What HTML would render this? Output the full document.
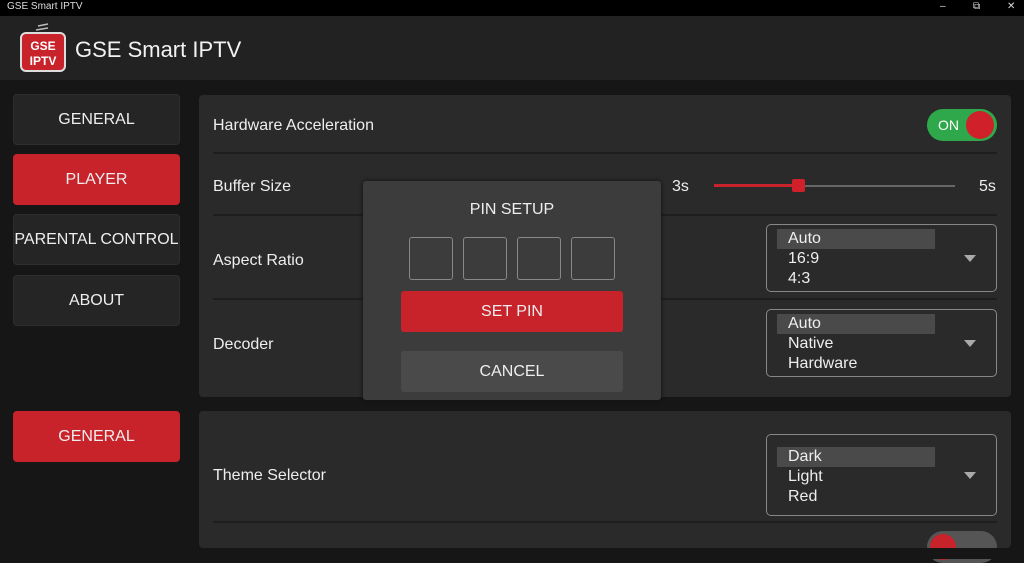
<!DOCTYPE html><html><head><style>
*{margin:0;padding:0;box-sizing:border-box}
body{width:1024px;height:559px;background:#161616;font-family:"Liberation Sans",sans-serif;color:#eee;position:relative;overflow:hidden}
.a{position:absolute}
.tb{left:0;top:0;width:1024px;height:16px;background:#000;font-size:10px;line-height:14px;padding-left:7px;color:#ddd}
.hd{left:0;top:16px;width:1024px;height:64px;background:#222}
.btn{position:absolute;left:13px;width:167px;height:51px;border-radius:4px;background:#252525;border:1px solid #2e2e2e;display:flex;align-items:center;justify-content:center;font-size:16px;color:#eee}
.red{background:#c8222a;border-color:#c8222a}
.pn{background:#2a2a2a;border-radius:4px}
.lbl{font-size:16px;color:#eee}
.ln{height:2px;background:#1e1e1e;left:213px;width:784px}
.dd{border:1px solid #888;border-radius:5px;width:231px;font-size:16px;line-height:20px;padding:4px 10px 0 10px}
.dd div{padding-left:11px}
.dd .s{background:#4a4a4a;width:158px}
.arr{position:absolute;right:20px;top:50%;margin-top:-3px;width:0;height:0;border-left:6px solid transparent;border-right:6px solid transparent;border-top:7px solid #aaa}
.box{top:237px;width:44px;height:43px;border:1px solid #888;border-radius:3px}
</style></head><body>
<div class="a tb">GSE Smart IPTV<span style="position:absolute;left:940px">&#8211;</span><span style="position:absolute;left:973px">&#10697;</span><span style="position:absolute;left:1007px">&#10005;</span></div>
<div class="a hd"></div>
<svg class="a" style="left:18px;top:22px" width="50" height="52" viewBox="0 0 50 52"><path d="M20 4l10-2M18 8l12-2" stroke="#bbb" stroke-width="1.5"/><rect x="3" y="11" width="44" height="38" rx="5" fill="#c8222a" stroke="#ddd" stroke-width="2"/><text x="25" y="28" font-family="Liberation Sans" font-weight="bold" font-size="12" fill="#fff" text-anchor="middle">GSE</text><text x="25" y="43" font-family="Liberation Sans" font-weight="bold" font-size="12" fill="#fff" text-anchor="middle">IPTV</text></svg>
<div class="a" style="left:75px;top:37px;font-size:22px;color:#f2f2f2">GSE Smart IPTV</div>
<div class="btn" style="top:94px">GENERAL</div>
<div class="btn red" style="top:154px">PLAYER</div>
<div class="btn" style="top:214px">PARENTAL CONTROL</div>
<div class="btn" style="top:275px">ABOUT</div>
<div class="btn red" style="top:411px">GENERAL</div>
<div class="a pn" style="left:199px;top:95px;width:812px;height:302px"></div>
<div class="a pn" style="left:199px;top:411px;width:812px;height:137px"></div>
<div class="a lbl" style="left:213px;top:117px">Hardware Acceleration</div>
<div class="a" style="left:927px;top:109px;width:70px;height:32px;border-radius:16px;background:#2ea84a;font-size:14px;line-height:32px;padding-left:11px;color:#fff">ON<div class="a" style="left:39px;top:2px;width:28px;height:28px;border-radius:50%;background:#d0202a"></div></div>
<div class="a ln" style="top:152px"></div>
<div class="a lbl" style="left:213px;top:178px">Buffer Size</div>
<div class="a lbl" style="left:672px;top:178px">3s</div>
<div class="a lbl" style="left:979px;top:178px">5s</div>
<div class="a" style="left:714px;top:185px;width:241px;height:2px;background:#666"></div>
<div class="a" style="left:714px;top:184px;width:84px;height:3px;background:#c8222a"></div>
<div class="a" style="left:792px;top:179px;width:13px;height:13px;background:#d0202a;border-radius:2px"></div>
<div class="a ln" style="top:214px"></div>
<div class="a lbl" style="left:213px;top:252px">Aspect Ratio</div>
<div class="a dd" style="left:766px;top:224px;height:68px"><div class="s">Auto</div><div>16:9</div><div>4:3</div><span class="arr"></span></div>
<div class="a ln" style="top:298px"></div>
<div class="a lbl" style="left:213px;top:336px">Decoder</div>
<div class="a dd" style="left:766px;top:309px;height:68px"><div class="s">Auto</div><div>Native</div><div>Hardware</div><span class="arr"></span></div>
<div class="a lbl" style="left:213px;top:467px">Theme Selector</div>
<div class="a dd" style="left:766px;top:434px;height:82px;padding-top:12px"><div class="s">Dark</div><div>Light</div><div>Red</div><span class="arr"></span></div>
<div class="a ln" style="top:521px"></div>
<div class="a" style="left:927px;top:531px;width:70px;height:32px;border-radius:16px;background:#555"><div class="a" style="left:3px;top:3px;width:26px;height:26px;border-radius:50%;background:#c8222a"></div></div>
<div class="a" style="left:0;top:548px;width:1024px;height:11px;background:#161616"></div>
<div class="a" style="left:363px;top:181px;width:298px;height:219px;background:#3c3c3c;border-radius:3px;box-shadow:0 0 4px #111"></div>
<div class="a" style="left:363px;top:201px;width:298px;text-align:center;font-size:16px">PIN SETUP</div>
<div class="a box" style="left:409px"></div><div class="a box" style="left:463px"></div><div class="a box" style="left:517px"></div><div class="a box" style="left:571px"></div>
<div class="a" style="left:401px;top:291px;width:222px;height:41px;background:#c8222a;border-radius:3px;text-align:center;line-height:42px;font-size:16px">SET PIN</div>
<div class="a" style="left:401px;top:351px;width:222px;height:41px;background:#4a4a4a;border-radius:3px;text-align:center;line-height:42px;font-size:16px">CANCEL</div>
</body></html>
